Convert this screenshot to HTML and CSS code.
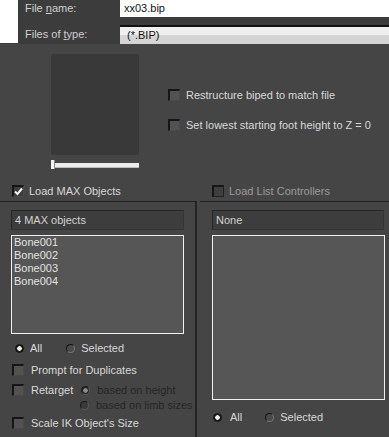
FILE: index.html
```html
<!DOCTYPE html>
<html lang="en">
<head>
    <meta charset="UTF-8">
    <title>Load Biped File</title>
    <link rel="stylesheet" href="styles.css">
</head>
<body>
    <!-- File bar -->
    <div class="file-bar">
        <div class="blank"></div>
        <div class="file-fields">
            <label class="field-label">File <u>n</u>ame:</label>
            <div class="name-input">xx03.bip</div>
            <label class="field-label second">Files of <u>t</u>ype:</label>
            <div class="type-select">(*.BIP)</div>
        </div>
    </div>

    <!-- Preview and options -->
    <div class="upper">
        <div class="preview-col">
            <div class="preview"></div>
            <div class="slider"><span class="handle"></span></div>
        </div>
        <div class="top-options">
            <div class="row"><span class="check"></span><span class="text">Restructure biped to match file</span></div>
            <div class="row"><span class="check"></span><span class="text">Set lowest starting foot height to Z = 0</span></div>
        </div>
    </div>

    <div class="load-row">
        <div class="load-left">
            <span class="check checked">
                <svg width="9" height="9" viewBox="0 0 9 9"><polyline points="1,4.5 3.5,7 8,1.5" fill="none" stroke="#f4f4f4" stroke-width="2"/></svg>
            </span>
            <span class="text">Load MAX Objects</span>
        </div>
        <div class="load-right">
            <span class="check dim"></span>
            <span class="text dim-text">Load List Controllers</span>
        </div>
    </div>

    <!-- Panels -->
    <div class="panels">
        <div class="panel left">
            <div class="field">4 MAX objects</div>
            <div class="list short">
                <div>Bone001</div>
                <div>Bone002</div>
                <div>Bone003</div>
                <div>Bone004</div>
            </div>
            <div class="radio-row">
                <span class="radio on first"></span><span class="text">All</span>
                <span class="radio sel-radio"></span><span class="text">Selected</span>
            </div>
            <div class="row prompt"><span class="check"></span><span class="text">Prompt for Duplicates</span></div>
            <div class="row retarget">
                <span class="check"></span><span class="text">Retarget</span>
                <span class="radio on off-state target-radio"></span><span class="text disabled">based on height</span>
            </div>
            <div class="row limb"><span class="radio off-state"></span><span class="text disabled">based on limb sizes</span></div>
            <div class="row scale"><span class="check"></span><span class="text">Scale IK Object's Size</span></div>
        </div>
        <div class="panel right">
            <div class="field">None</div>
            <div class="list tall"></div>
            <div class="radio-row bottom">
                <span class="radio on first"></span><span class="text">All</span>
                <span class="radio sel-radio"></span><span class="text">Selected</span>
            </div>
        </div>
    </div>
</body>
</html>
```

FILE: styles.css
```css
body {
    margin: 0;
    width: 389px;
    height: 437px;
    overflow: hidden;
    background: #454545;
    font-family: "Liberation Sans", Arial, sans-serif;
    font-size: 11px;
    color: #d8d8d8;
}
.file-bar {
    display: flex;
    height: 43px;
    border-bottom: 1px solid #3b3b3b;
}
.file-bar .blank {
    width: 18px;
    background: #ffffff;
}
.file-fields {
    flex: 1;
    background: #3c3c3c;
    display: grid;
    grid-template-columns: 102px 1fr;
    grid-template-rows: 17px 19px;
    row-gap: 8px;
}
.field-label {
    padding-left: 7px;
    line-height: 17px;
    color: #cfcfcf;
}
.field-label.second {
    line-height: 19px;
}
.name-input {
    background: #ffffff;
    color: #111;
    padding-left: 4px;
    line-height: 17px;
}
.type-select {
    border-top: 2px solid #111;
    background: linear-gradient(#efefef 0, #efefef 8px, #d5d5d5 8px);
    color: #111;
    padding-left: 7px;
    line-height: 17px;
}
.upper {
    display: flex;
    height: 130px;
}
.preview-col {
    margin-left: 51px;
    padding-top: 10px;
    width: 88px;
}
.preview {
    height: 101px;
    background: #393939;
    border-radius: 2px;
}
.slider {
    position: relative;
    margin-top: 8px;
    margin-left: 3px;
    height: 4px;
    background: #ececec;
    border-bottom: 1px solid #bdbdbd;
}
.handle {
    position: absolute;
    left: -3px;
    top: -3px;
    width: 3px;
    height: 9px;
    background: #f5f5f5;
    border-right: 1px solid #888;
}
.top-options {
    margin-left: 29px;
    padding-top: 45px;
    display: flex;
    flex-direction: column;
    gap: 18px;
}
.row {
    display: flex;
    align-items: center;
    height: 12px;
}
.check {
    box-sizing: border-box;
    width: 12px;
    height: 12px;
    flex: none;
    background: #525252;
    border-top: 2px solid #161616;
    border-left: 2px solid #161616;
    border-right: 1px solid #4a4a4a;
    border-bottom: 1px solid #4a4a4a;
    display: flex;
    align-items: center;
    justify-content: center;
}
.check.checked {
    background: #3c3c3c;
}
.check.dim {
    background: #3e3e3e;
    border-right: 1px solid #222;
    border-bottom: 1px solid #222;
}
.top-options .text {
    margin-left: 6px;
}
.load-row {
    display: flex;
    height: 27px;
    align-items: flex-start;
    padding-top: 11px;
    box-sizing: border-box;
}
.load-left {
    width: 200px;
    padding-left: 12px;
    display: flex;
    align-items: center;
    box-sizing: border-box;
}
.load-right {
    padding-left: 12px;
    display: flex;
    align-items: center;
}
.load-row .text {
    margin-left: 5px;
}
.dim-text {
    color: #9b9b9b;
}
.panels {
    display: flex;
    height: 236px;
}
.panel {
    border-top: 1px solid #222;
    box-sizing: border-box;
}
.panel.left {
    width: 197px;
    border-right: 2px solid #242424;
    padding: 8px 0 0 11px;
}
.panel.right {
    flex: 1;
    margin-left: 3px;
    padding: 8px 0 0 12px;
}
.field {
    box-sizing: border-box;
    width: 173px;
    height: 20px;
    background: #3d3d3d;
    border-top: 1px solid #262626;
    border-left: 1px solid #262626;
    border-right: 1px solid #353535;
    border-bottom: 1px solid #353535;
    padding-left: 3px;
    line-height: 18px;
    color: #d2d2d2;
}
.panel.right .field {
    width: 172px;
}
.list {
    box-sizing: border-box;
    margin-top: 5px;
    width: 173px;
    background: #565656;
    border: 1px solid #f0f0f0;
    padding: 0 2px;
    line-height: 13px;
    color: #e2e2e2;
}
.list.short {
    height: 99px;
}
.list.tall {
    height: 165px;
}
.radio-row {
    display: flex;
    align-items: center;
    height: 14px;
    margin-top: 7px;
}
.radio-row.bottom {
    margin-top: 10px;
}
.radio {
    box-sizing: border-box;
    width: 9px;
    height: 9px;
    flex: none;
    border-radius: 50%;
    background: #4a4a4a;
    border: 1px solid;
    border-color: #151515 #777 #777 #151515;
}
.radio.on {
    background: radial-gradient(circle, #f2f2f2 0, #f2f2f2 2px, #1e1e1e 2.5px);
    border-color: #111;
}
.radio.first {
    margin-left: 4px;
}
.radio-row .text {
    margin-left: 6px;
}
.radio.sel-radio {
    margin-left: 24px;
}
.panel.right .radio.first {
    margin-left: 1px;
}
.panel.right .radio.sel-radio {
    margin-left: 23px;
}
.panel.right .radio-row .text {
    margin-left: 8px;
}
.panel.right .radio-row .text:last-child {
    margin-left: 6px;
}
.panel .row .check {
    margin-left: 1px;
}
.panel .row .text {
    margin-left: 7px;
}
.row.prompt {
    margin-top: 9px;
}
.row.retarget {
    margin-top: 8px;
}
.row.limb {
    margin-top: 3px;
}
.row.limb .radio {
    margin-left: 69px;
}
.row.scale {
    margin-top: 6px;
}
.radio.target-radio {
    margin-left: 8px;
}
.radio.off-state {
    background: #3a3a3a;
    border-color: #1c1c1c #5a5a5a #5a5a5a #1c1c1c;
}
.radio.on.off-state {
    background: radial-gradient(circle, #8a8a8a 0, #8a8a8a 2px, #262626 2.5px);
}
.panel .row .text.disabled {
    margin-left: 7px;
    color: #262626;
}
```
